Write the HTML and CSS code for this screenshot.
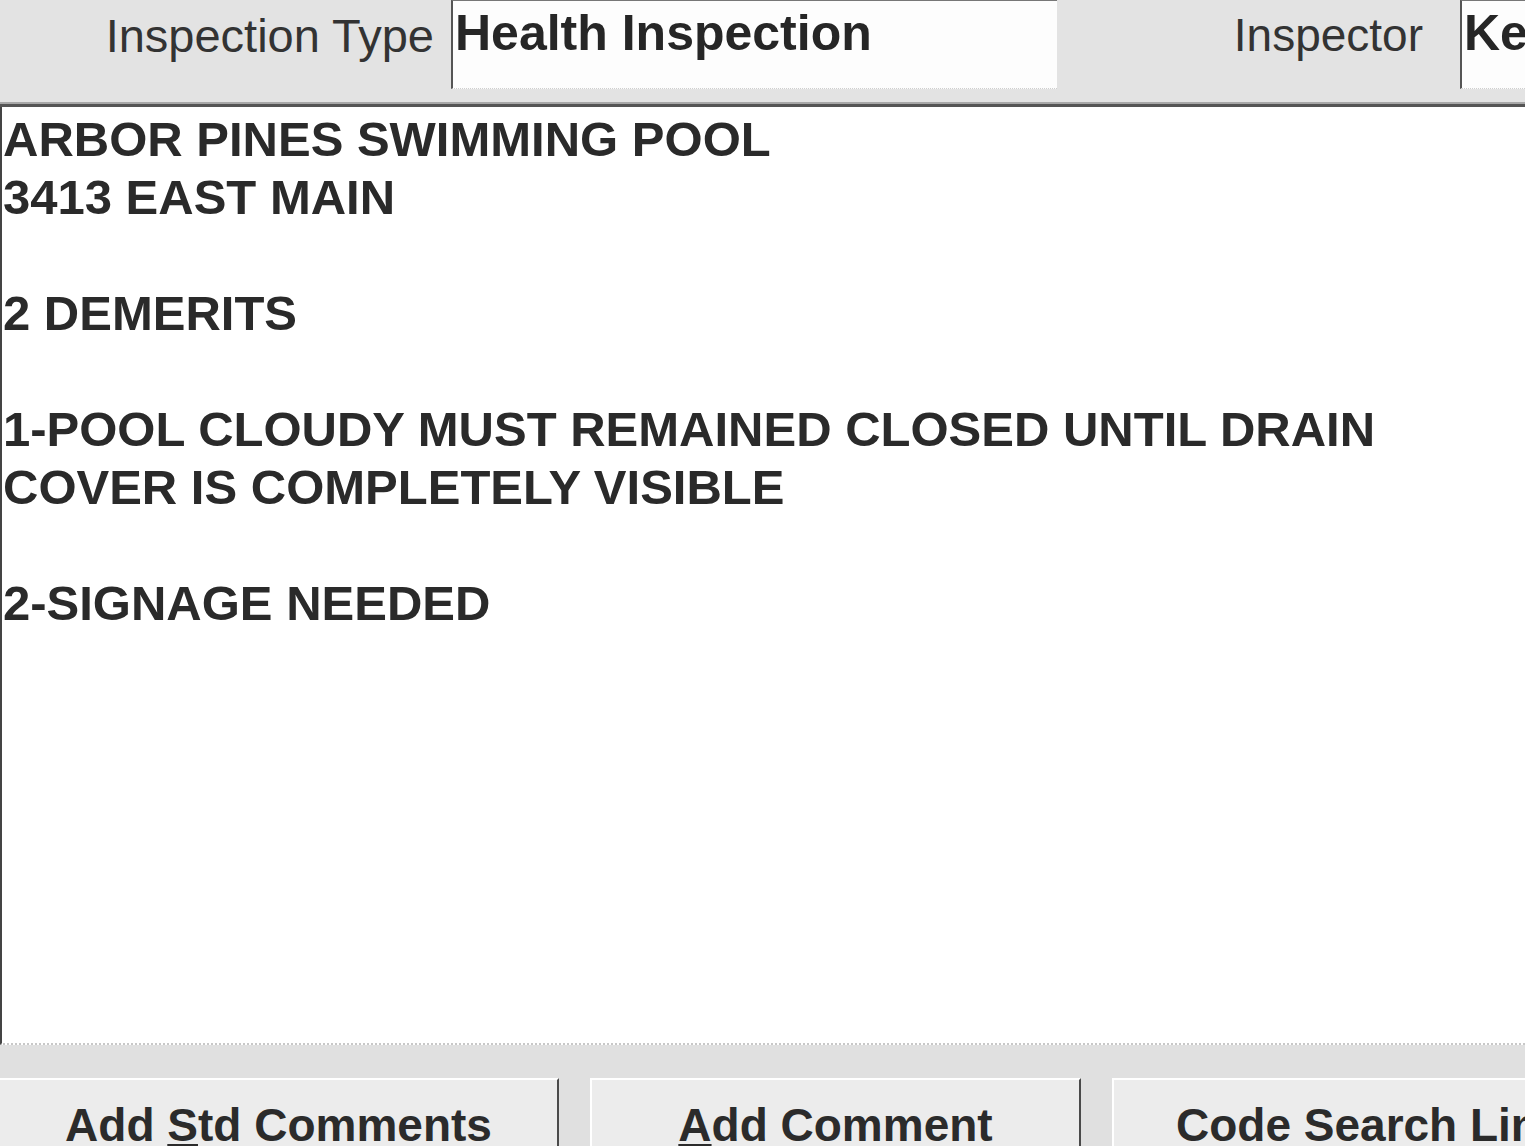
FILE: index.html
```html
<!DOCTYPE html>
<html lang="en">
<head>
<meta charset="utf-8">
<title>Inspection Comments</title>
<link rel="stylesheet" href="styles.css">
</head>
<body>
<div class="screen">
  <div class="top-bar">
    <div class="label label-type">Inspection Type</div>
    <div class="field field-type">Health Inspection</div>
    <div class="label label-inspector">Inspector</div>
    <div class="field field-inspector">Ke</div>
  </div>
  <div class="comments">
    <div class="line">ARBOR PINES SWIMMING POOL</div>
    <div class="line">3413 EAST MAIN</div>
    <div class="line blank">&nbsp;</div>
    <div class="line">2 DEMERITS</div>
    <div class="line blank">&nbsp;</div>
    <div class="line">1-POOL CLOUDY MUST REMAINED CLOSED UNTIL DRAIN</div>
    <div class="line">COVER IS COMPLETELY VISIBLE</div>
    <div class="line blank">&nbsp;</div>
    <div class="line">2-SIGNAGE NEEDED</div>
  </div>
  <div class="button-bar">
    <div class="btn btn-first">Add <u>S</u>td Comments</div>
    <div class="btn btn-mid"><u>A</u>dd Comment</div>
    <div class="btn btn-last">Code Search Lin</div>
  </div>
</div>
</body>
</html>
```
FILE: styles.css
```css
html, body {
  margin: 0;
  padding: 0;
  background: #e2e2e2;
  overflow: hidden;
}

.screen {
  width: 1525px;
  height: 1146px;
  display: flex;
  flex-direction: column;
  overflow: hidden;
  font-family: "Liberation Sans", Arial, sans-serif;
  color: #2a2a2a;
}

/* top header */
.top-bar {
  height: 104px;
  flex: 0 0 auto;
  display: grid;
  grid-template-columns: 451px 606px 403px 1fr;
  align-items: start;
  background: #e3e3e3;
  border-bottom: 3px solid #555;
  box-shadow: inset 0 -2px 0 #a8a8a8;
}

.label {
  font-size: 46px;
  line-height: 46px;
  padding-top: 12px;
  text-align: right;
  color: #333;
  white-space: nowrap;
}

.label-type {
  font-size: 47px;
  line-height: 47px;
  padding-right: 17px;
}

.label-inspector { padding-right: 37px; }

.field {
  background: #fdfdfd;
  border-left: 2px solid #555;
  border-top: 1px solid #777;
  border-bottom: 1px dotted #cfcfcf;
  font-weight: bold;
  font-size: 50px;
  line-height: 50px;
  padding-top: 7px;
  padding-left: 2px;
  box-sizing: border-box;
  height: 89px;
  white-space: nowrap;
  overflow: hidden;
  color: #262626;
}

/* comment text area */
.comments {
  flex: 1 1 auto;
  background: #ffffff;
  border-left: 2px solid #444;
  border-bottom: 2px dotted #c8c8c8;
  padding: 3px 0 0 1px;
  font-weight: bold;
  font-size: 49px;
  line-height: 58px;
  color: #2a2a2a;
  white-space: nowrap;
  overflow: hidden;
}

/* bottom buttons */
.button-bar {
  flex: 0 0 101px;
  display: flex;
  gap: 31px;
  padding-top: 33px;
  box-sizing: border-box;
  background: #e0e0e0;
  overflow: hidden;
}

.btn {
  flex: 0 0 auto;
  height: 120px;
  box-sizing: border-box;
  background: #ececec;
  border-top: 2px solid #ffffff;
  border-left: 2px solid #ffffff;
  border-right: 2px solid #4a4a4a;
  font-weight: bold;
  font-size: 46px;
  line-height: 46px;
  padding-top: 22px;
  text-align: center;
  color: #2b2b2b;
  white-space: nowrap;
}

.btn u {
  text-decoration-thickness: 2px;
  text-underline-offset: 3px;
}

.btn-first {
  width: 559px;
  border-left: none;
}

.btn-mid {
  width: 491px;
}

.btn-last {
  width: 491px;
  border-right: none;
  text-align: left;
  padding-left: 62px;
}
```
